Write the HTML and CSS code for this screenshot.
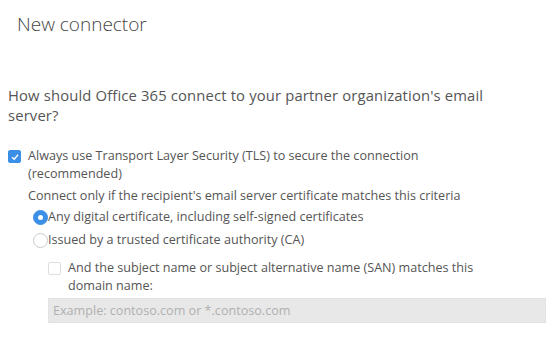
FILE: index.html
```html
<!DOCTYPE html>
<html lang="en">

<head>
    <meta charset="utf-8">
    <title>New connector</title>
    <link rel="stylesheet" href="styles.css">
</head>

<body>
    <h1 class="title">New connector</h1>

    <p class="question">How should Office 365 connect to your partner organization's email server?</p>

    <div class="option first">
        <span class="box checked">
            <svg width="10" height="10" viewBox="0 0 10 10"><path d="M2 5.2 L4.2 7.3 L8 2.8" fill="none" stroke="#fff" stroke-width="1.4"/></svg>
        </span>
        <span class="label">Always use Transport Layer Security (TLS) to secure the connection (recommended)</span>
    </div>

    <div class="nested">
        <p class="criteria">Connect only if the recipient's email server certificate matches this criteria</p>

        <div class="radio-row">
            <span class="radio on"><span class="dot"></span></span>
            <span class="label">Any digital certificate, including self-signed certificates</span>
        </div>
        <div class="radio-row">
            <span class="radio"></span>
            <span class="label">Issued by a trusted certificate authority (CA)</span>
        </div>

        <div class="sub">
            <div class="option">
                <span class="box"></span>
                <span class="label">And the subject name or subject alternative name (SAN) matches this domain name:</span>
            </div>
            <div class="field">Example: contoso.com or *.contoso.com</div>
        </div>
    </div>
</body>

</html>
```

FILE: styles.css
```css
* {
    margin: 0;
    box-sizing: border-box;
}

body {
    background: #fff;
    color: #555;
    font-family: 'Open Sans', sans-serif;
    font-size: 12.6px;
    width: 559px;
    height: 361px;
    overflow: hidden;
}

.title {
    font-weight: 300;
    font-size: 19px;
    color: #444;
    padding: 11px 0 0 17px;
    height: 82px;
}

.question {
    font-size: 14.8px;
    line-height: 20px;
    padding: 3px 0 0 8px;
    width: 530px;
    letter-spacing: 0.15px;
}

.option {
    display: flex;
    align-items: flex-start;
    line-height: 18px;
}

.option.first {
    padding: 22px 0 0 8px;
}

.option.first .label {
    width: 440px;
}

.box {
    flex: none;
    width: 13px;
    height: 13px;
    border: 1px solid #ddd;
    border-radius: 2px;
    margin: 3px 7px 0 0;
    background: #fff;
    display: flex;
    align-items: center;
    justify-content: center;
}

.box.checked {
    background: #3c8fe6;
    border-color: #3c8fe6;
}

.nested {
    padding-left: 28px;
}

.criteria {
    line-height: 18px;
    padding-top: 4px;
}

.radio-row {
    display: flex;
    align-items: center;
    padding: 3px 0 2px 5px;
    line-height: 18px;
}

.radio {
    flex: none;
    width: 15px;
    height: 15px;
    border: 1px solid #ccc;
    border-radius: 50%;
    display: flex;
    align-items: center;
    justify-content: center;
}

.radio.on {
    background: #3c8fe6;
    border-color: #3c8fe6;
}

.dot {
    width: 5px;
    height: 5px;
    border-radius: 50%;
    background: #fff;
}

.sub {
    padding: 8px 0 0 20px;
}

.sub .label {
    width: 430px;
}

.field {
    margin-top: 3px;
    width: 498px;
    height: 25px;
    background: #e8e8e8;
    border: 1px solid #e2e2e2;
    color: #b0b0b0;
    line-height: 23px;
    padding-left: 4px;
}
```
